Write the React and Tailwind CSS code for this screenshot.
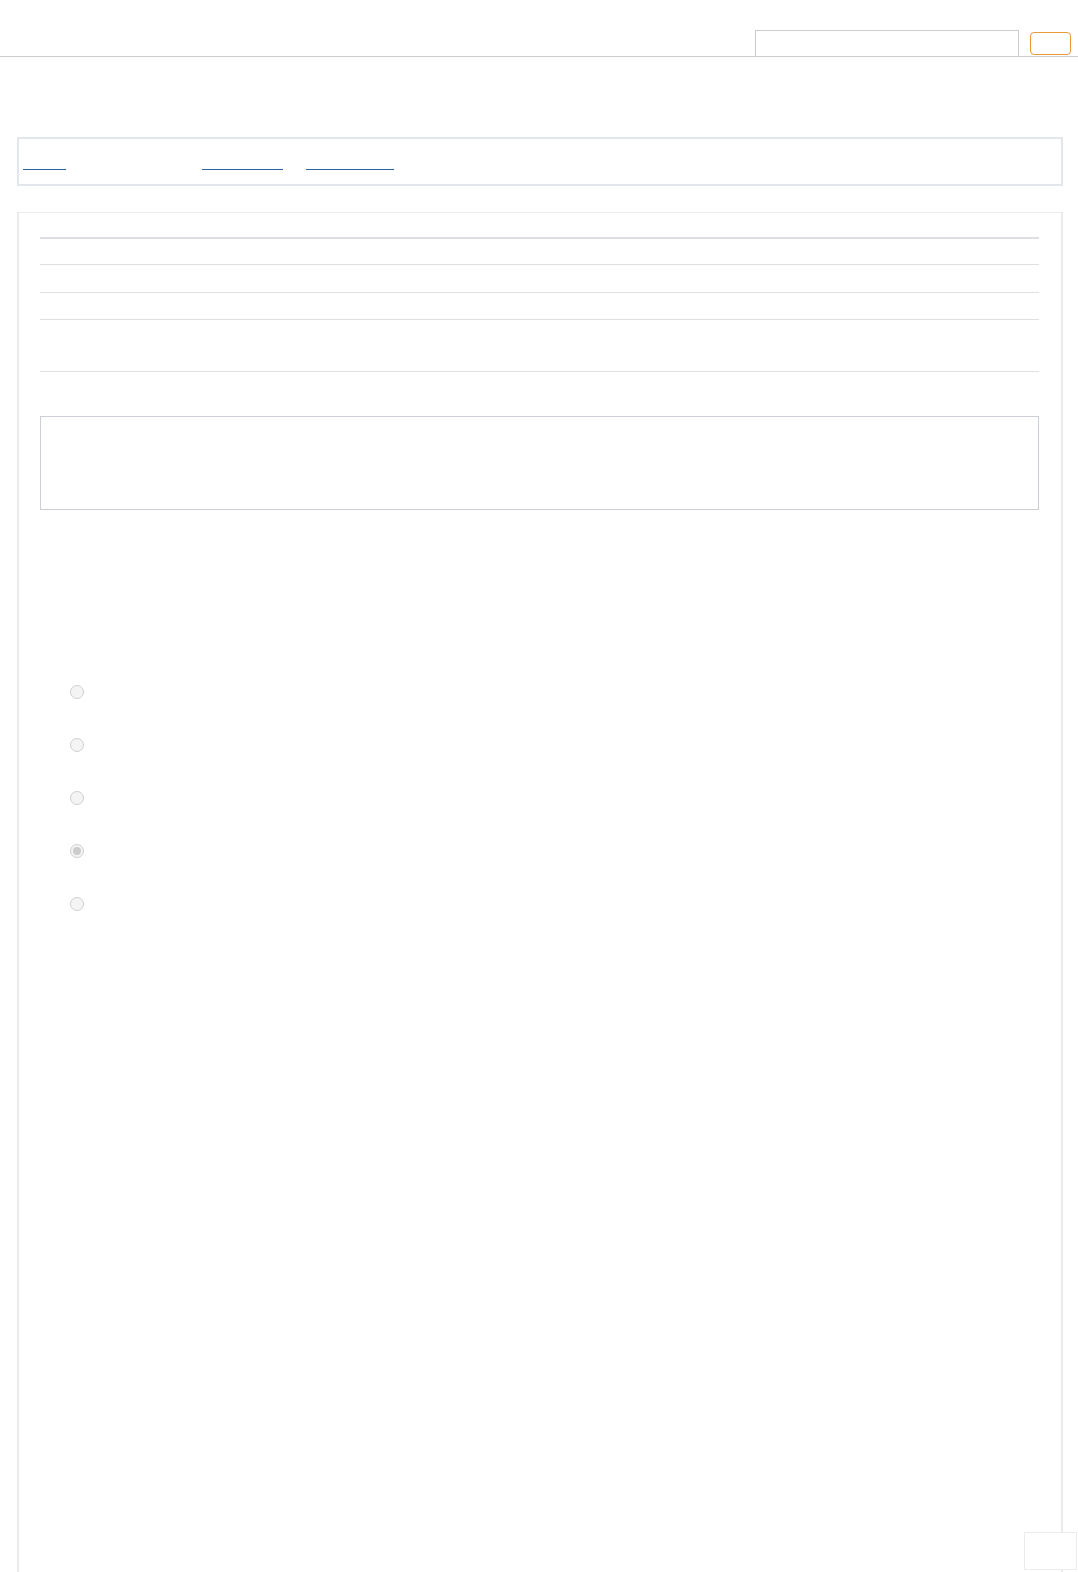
export default function App() {
  const options = [false, false, false, true, false];
  return (
    <div className="min-h-screen bg-white" style={{ fontFamily: '"Liberation Sans", Arial, sans-serif' }}>
      <header className="h-[57px] border-b border-[#cccccc] flex items-end justify-end pr-[7px]">
        <div className="w-[264px] h-[26px] border border-b-0 border-[#cccccc] bg-white" />
        <button className="ml-[11px] mb-[1px] w-[41px] h-[23px] rounded-[4px] border border-[#e8993a] bg-white" />
      </header>

      <nav className="mt-[80px] ml-[17px] mr-[15px] h-[49px] border-2 border-[#e3e7eb] flex items-start pt-[30px] pl-[4px]">
        <a className="block w-[43px] h-[1px] bg-[#2a64a6]" href="#" />
        <a className="block ml-[136px] w-[81px] h-[1px] bg-[#2a64a6]" href="#" />
        <a className="block ml-[23px] w-[88px] h-[1px] bg-[#2a64a6]" href="#" />
      </nav>

      <main className="mt-[26px] ml-[17px] mr-[15px] min-h-[1380px] border border-[#ebebeb] border-l-2 border-r-2 pl-[21px] pr-[22px] pt-[24px]">
        <div className="h-[2px] bg-[#dcdee2]" />
        <div className="h-[26px] border-b border-[#e0e0e0]" />
        <div className="h-[28px] border-b border-[#e0e0e0]" />
        <div className="h-[27px] border-b border-[#e0e0e0]" />
        <div className="h-[52px] border-b border-[#e0e0e0]" />
        <div className="mt-[44px] h-[94px] border border-[#ccd0d6]" />

        <ul className="mt-[175px] pl-[30px] flex flex-col gap-[39px]">
          {options.map((checked, i) => (
            <li key={i} className="h-[14px] flex items-center">
              <span className="w-[14px] h-[14px] rounded-full border border-[#cfcfcf] bg-[#f4f4f4] flex items-center justify-center">
                {checked && <span className="w-[8px] h-[8px] rounded-full bg-[#cccccc]" />}
              </span>
            </li>
          ))}
        </ul>
      </main>

      <div className="fixed right-[1px] bottom-[2px] w-[53px] h-[38px] border border-[#ececec] bg-white" />
    </div>
  );
}
